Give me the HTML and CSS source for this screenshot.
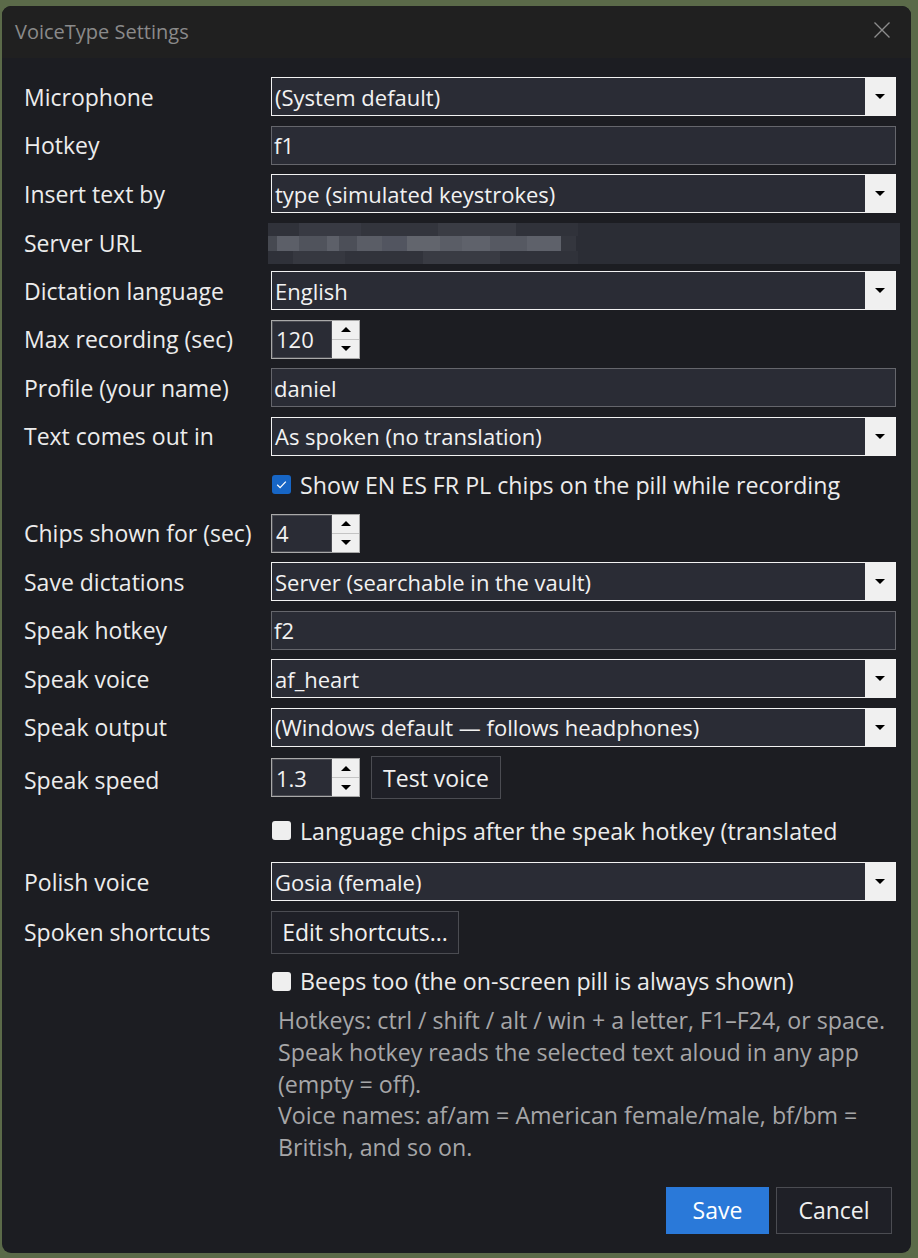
FILE: index.html
```html
<!DOCTYPE html>
<html lang="en">
<head>
<meta charset="utf-8">
<title>VoiceType Settings</title>
<link rel="stylesheet" href="styles.css">
</head>
<body>
<div class="window">
  <div class="titlebar">
    <span class="title">VoiceType Settings</span>
    <svg class="close" width="18" height="18" viewBox="0 0 18 18" aria-hidden="true">
      <path d="M1.5 1.5 L16.5 16.5 M16.5 1.5 L1.5 16.5" stroke="#8c8c8c" stroke-width="1.4" fill="none"/>
    </svg>
  </div>
  <div class="content">
    <div class="form">
      <div class="row"><span class="label">Microphone</span>
        <div class="select"><span class="val">(System default)</span><span class="drop"><i class="tri-down"></i></span></div></div>
      <div class="row"><span class="label">Hotkey</span>
        <div class="entry">f1</div></div>
      <div class="row"><span class="label">Insert text by</span>
        <div class="select"><span class="val">type (simulated keystrokes)</span><span class="drop"><i class="tri-down"></i></span></div></div>
      <div class="row"><span class="label">Server URL</span>
        <div class="blur"><div class="blur-top"></div><div class="blur-mid"></div><div class="blur-bot"></div></div></div>
      <div class="row"><span class="label">Dictation language</span>
        <div class="select"><span class="val">English</span><span class="drop"><i class="tri-down"></i></span></div></div>
      <div class="row"><span class="label">Max recording (sec)</span>
        <div class="spin"><span class="spin-val">120</span><span class="spin-btns"><span class="sb"><i class="tri-up"></i></span><span class="sb"><i class="tri-down"></i></span></span></div></div>
      <div class="row"><span class="label">Profile (your name)</span>
        <div class="entry">daniel</div></div>
      <div class="row"><span class="label">Text comes out in</span>
        <div class="select"><span class="val">As spoken (no translation)</span><span class="drop"><i class="tri-down"></i></span></div></div>
      <div class="row"><span></span>
        <label class="check"><span class="box checked"><svg width="19" height="19" viewBox="0 0 19 19"><path d="M5.2 9.8 L8.1 12.6 L13.8 6.6" stroke="#fff" stroke-width="1.3" fill="none"/></svg></span><span>Show EN ES FR PL chips on the pill while recording</span></label></div>
      <div class="row"><span class="label">Chips shown for (sec)</span>
        <div class="spin"><span class="spin-val">4</span><span class="spin-btns"><span class="sb"><i class="tri-up"></i></span><span class="sb"><i class="tri-down"></i></span></span></div></div>
      <div class="row"><span class="label">Save dictations</span>
        <div class="select"><span class="val">Server (searchable in the vault)</span><span class="drop"><i class="tri-down"></i></span></div></div>
      <div class="row"><span class="label">Speak hotkey</span>
        <div class="entry">f2</div></div>
      <div class="row"><span class="label">Speak voice</span>
        <div class="select"><span class="val">af_heart</span><span class="drop"><i class="tri-down"></i></span></div></div>
      <div class="row"><span class="label">Speak output</span>
        <div class="select"><span class="val">(Windows default — follows headphones)</span><span class="drop"><i class="tri-down"></i></span></div></div>
      <div class="row tall"><span class="label low">Speak speed</span>
        <div class="inline">
          <div class="spin"><span class="spin-val">1.3</span><span class="spin-btns"><span class="sb"><i class="tri-up"></i></span><span class="sb"><i class="tri-down"></i></span></span></div>
          <button class="btn test">Test voice</button>
        </div></div>
      <div class="row taller"><span></span>
        <label class="check"><span class="box"></span><span>Language chips after the speak hotkey (translated</span></label></div>
      <div class="row"><span class="label">Polish voice</span>
        <div class="select"><span class="val">Gosia (female)</span><span class="drop"><i class="tri-down"></i></span></div></div>
      <div class="row tall"><span class="label">Spoken shortcuts</span>
        <div class="inline"><button class="btn edit">Edit shortcuts...</button></div></div>
      <div class="row short"><span></span>
        <label class="check"><span class="box"></span><span>Beeps too (the on-screen pill is always shown)</span></label></div>
    </div>
    <div class="hint">
      Hotkeys: ctrl / shift / alt / win + a letter, F1–F24, or space.<br>
      Speak hotkey reads the selected text aloud in any app<br>
      (empty = off).<br>
      Voice names: af/am = American female/male, bf/bm =<br>
      British, and so on.
    </div>
    <div class="actions">
      <button class="btn primary">Save</button>
      <button class="btn cancel">Cancel</button>
    </div>
  </div>
</div>
</body>
</html>
```
FILE: styles.css
```css
html, body {
  margin: 0;
  padding: 0;
  background: #5b6a49;
}
body {
  width: 918px;
  height: 1258px;
  overflow: hidden;
  font-family: "Open Sans", "Noto Sans", sans-serif;
}
.window {
  margin: 6px 7px 0 2px;
  width: 909px;
  height: 1247px;
  background: #1c1d22;
  border-radius: 9px;
  overflow: hidden;
  display: flex;
  flex-direction: column;
}
.titlebar {
  height: 52px;
  flex: none;
  background: #202020;
  display: flex;
  align-items: center;
  justify-content: space-between;
  padding: 0 20px 0 13px;
}
.title {
  color: #8a8a8a;
  font-size: 20px;
  margin-top: -2px;
}
.close {
  margin-top: -4px;
}
.content {
  padding: 19px 15px 0 22px;
  display: flex;
  flex-direction: column;
}
.form {
  display: flex;
  flex-direction: column;
  gap: 9.5px;
}
.row {
  display: grid;
  grid-template-columns: 247px 1fr;
  align-items: center;
  height: 39px;
}
.row.tall { height: 43px; }
.row.taller { height: 44px; }
.row.short { height: 36px; }
.label {
  color: #ececec;
  font-size: 23px;
  line-height: 1;
  white-space: nowrap;
  padding-top: 1px;
}
.label.low { padding-top: 5px; }
.select, .entry {
  height: 39px;
  box-sizing: border-box;
  background: #2a2c35;
  color: #f2f2f2;
  font-size: 22px;
  display: flex;
  align-items: center;
}
.select {
  border: 1px solid #f2f2f2;
}
.entry {
  border: 1px solid #65666c;
  padding-left: 2px;
}
.val {
  flex: 1;
  padding-left: 3px;
  white-space: nowrap;
}
.drop {
  width: 30px;
  height: 100%;
  background: #f0f0f0;
  display: flex;
  align-items: center;
  justify-content: center;
}
.tri-down, .tri-up {
  display: block;
  width: 0;
  height: 0;
  border-left: 5px solid transparent;
  border-right: 5px solid transparent;
}
.tri-down { border-top: 5px solid #000; }
.tri-up { border-bottom: 5px solid #000; }
.blur {
  height: 41px;
  margin-left: -3px;
  margin-right: -4px;
  background: #2b2d35;
  display: flex;
  flex-direction: column;
}
.blur-top {
  height: 13px;
  width: 310px;
  background: linear-gradient(90deg, #30323a 0 10%, #383a43 10% 30%, #33353d 30% 55%, #3a3c44 55% 80%, #30323a 80% 100%);
}
.blur-mid {
  height: 15px;
  width: 308px;
  background: linear-gradient(90deg, #464951 0 3%, #5c5f68 3% 10%, #50535c 10% 19%, #5d6069 19% 23%, #4c4f58 23% 29%, #5a5d66 29% 37%, #525560 37% 45%, #62656d 45% 56%, #5a5d66 56% 63%, #5f626b 63% 72%, #565962 72% 84%, #5e616a 84% 95%, #34363e 95% 100%);
}
.blur-bot {
  height: 13px;
  width: 310px;
  background: linear-gradient(90deg, #2f3139 0 8%, #363840 8% 25%, #31333b 25% 50%, #393b43 50% 75%, #30323a 75% 100%);
}
.spin {
  width: 89px;
  height: 39px;
  box-sizing: border-box;
  border: 1px solid #a9a9a9;
  display: flex;
  background: #f0f0f0;
}
.spin-val {
  width: 60px;
  box-sizing: border-box;
  border: 1px solid #4a4b52;
  background: #2a2c35;
  color: #f2f2f2;
  font-size: 22px;
  display: flex;
  align-items: center;
  padding-left: 3px;
}
.spin-btns {
  flex: 1;
  display: flex;
  flex-direction: column;
}
.sb {
  flex: 1;
  display: flex;
  align-items: center;
  justify-content: center;
}
.sb + .sb { border-top: 1px solid #c4c4c4; }
.inline {
  display: flex;
  align-items: center;
  gap: 11px;
}
.btn {
  font-family: "Open Sans", "Noto Sans", sans-serif;
  font-size: 23px;
  color: #f0f0f0;
  background: #1f2027;
  border: 1px solid #4b4c52;
  padding: 0;
  box-sizing: border-box;
}
.btn.test { width: 130px; height: 43px; }
.btn.edit { width: 188px; height: 43px; }
.check {
  display: flex;
  align-items: center;
  gap: 9px;
  color: #ececec;
  font-size: 23.2px;
  white-space: nowrap;
  margin-left: 1px;
}
.box {
  width: 19px;
  height: 19px;
  border-radius: 3px;
  background: #efefef;
  flex: none;
  display: block;
}
.box.checked {
  background: #1766c6;
}
.box svg { display: block; }
.hint {
  margin-top: 6px;
  margin-left: 254px;
  color: #a6a6a8;
  font-size: 23.2px;
  line-height: 31.75px;
  white-space: nowrap;
}
.actions {
  margin-top: 23px;
  display: flex;
  justify-content: flex-end;
  gap: 7px;
  padding-right: 4px;
}
.btn.primary {
  width: 103px;
  height: 47px;
  background: #2a79d9;
  border-color: #2a79d9;
  color: #fff;
}
.btn.cancel {
  width: 116px;
  height: 47px;
}
```
